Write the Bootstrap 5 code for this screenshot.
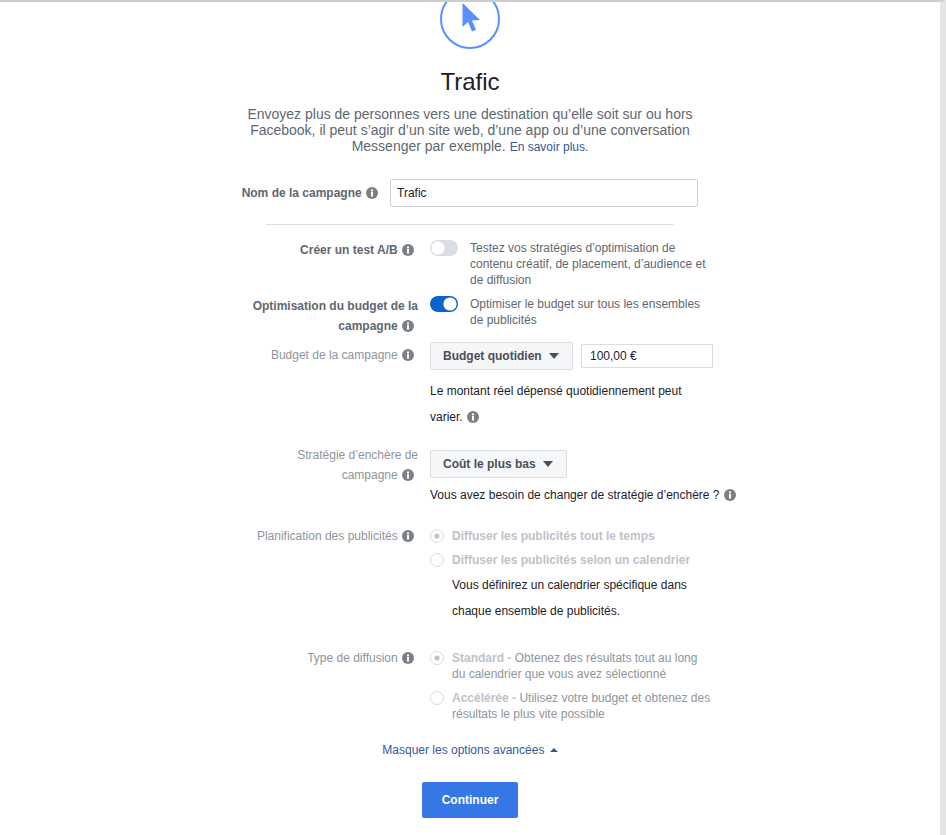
<!DOCTYPE html>
<html lang="fr">
<head>
    <meta charset="UTF-8">
    <meta name="viewport" content="width=device-width, initial-scale=1.0">
    <title>Trafic</title>
    <link href="https://cdn.jsdelivr.net/npm/bootstrap@5.3.0/dist/css/bootstrap.min.css" rel="stylesheet">
    <style>
        html, body { height: 835px; overflow: hidden; }
        body { background: #fff; font-family: "Liberation Sans", Arial, sans-serif; font-size: 12px; line-height: 16px; color: #606770; }
        .page-shell { height: 835px; border-top: 2px solid #cdcdcd; border-right: 6px solid #e4e4e4; overflow: hidden; }
        .objective-circle { width: 60px; height: 60px; margin: -13px auto 0; border: 2px solid #5890ff; border-radius: 50%; }
        .objective-title { margin: 17px 0 0; font-size: 24px; line-height: 32px; font-weight: 400; color: #1d2129; }
        .objective-desc { width: 470px; margin: 8px auto 0; font-size: 14px; line-height: 16px; color: #606770; }
        .fb-link { color: #365899; font-size: 12px; text-decoration: none; }
        .setup-form { width: 500px; margin: 24px 0 0 230px; }
        .name-row { height: 28px; }
        .name-label { width: 160px; padding-right: 12px; }
        .name-input.form-control { width: 308px; height: 28px; padding: 0 6px; border: 1px solid #ccd0d5; border-radius: 2px; font-size: 12px; color: #1d2129; }
        .form-sep { width: 408px; margin: 17px 0 15px 36px; border-top: 1px solid #dadde1; opacity: 1; }
        .field-label { width: 188px; flex: none; margin-right: 12px; text-align: right; font-size: 12px; line-height: 20px; color: #90949c; }
        .field-label.strong-label { font-weight: 700; color: #606770; }
        .field-label .info-ico { margin-right: 4px; }
        .budget-label { padding-top: 3px; }
        .field-body { flex: 1 1 auto; min-width: 0; }
        .bid-body { padding-top: 5px; }
        .info-ico { width: 12px; height: 12px; margin-left: 1px; vertical-align: -2px; }
        .switch-line { display: flex; gap: 12px; }
        .switch-line .form-check-input { width: 28px; height: 16px; margin: 0; flex: none; border: 0; border-radius: 8px; background-color: #dadde1; background-position: left center; background-image: url("data:image/svg+xml,%3csvg xmlns='http://www.w3.org/2000/svg' viewBox='-4 -4 8 8'%3e%3ccircle r='3.3' fill='%23fff'/%3e%3c/svg%3e"); }
        .switch-line .form-check-input:checked { background-color: #0b63ce; background-position: right center; }
        .switch-text { width: 240px; }
        .select-btn.btn { height: 28px; padding: 0 12px; border: 1px solid #dadde1; border-radius: 2px; background: #f5f6f7; color: #4b4f56; font-size: 12px; font-weight: 700; line-height: 26px; }
        .caret-down { display: inline-block; margin-left: 4px; margin-right: 1px; vertical-align: 1px; border-left: 5px solid transparent; border-right: 5px solid transparent; border-top: 6px solid #4b4f56; }
        .budget-input.form-control { width: 132px; height: 24px; padding: 0 8px; border: 1px solid #dadde1; border-radius: 0; font-size: 12px; color: #1d2129; }
        .black-note { margin: 0; line-height: 26px; color: #1d2129; }
        .budget-row { margin-top: 6px; }
        .budget-note { margin-top: 8px; }
        .schedule-note { margin-left: 22px; }
        .bid-row { margin-top: 15px; }
        .plan-row { margin-top: 18px; }
        .radio-line { display: flex; gap: 8px; min-height: 16px; margin-top: 2px; }
        .radio-line + .radio-line { margin-top: 8px; }
        .radio-line .form-check-input { width: 14px; height: 14px; margin: 1px 0 0; flex: none; opacity: 1; border: 1px solid #dadde1; background-color: #fff; background-image: none; }
        .radio-line .form-check-input:checked { background-color: #fff; background-image: url("data:image/svg+xml,%3csvg xmlns='http://www.w3.org/2000/svg' viewBox='-7 -7 14 14'%3e%3ccircle r='3' fill='%23bec2c9'/%3e%3c/svg%3e"); }
        .radio-strong { font-weight: 700; color: #bec2c9; }
        .radio-text { color: #90949c; width: 262px; }
        .more-link { margin: 20px 0 0; color: #365899; line-height: 16px; }
        .caret-up { display: inline-block; margin-left: 2px; vertical-align: 2px; border-left: 4px solid transparent; border-right: 4px solid transparent; border-bottom: 4px solid #365899; }
        .continue-btn.btn { width: 96px; height: 36px; padding: 0; border: 0; border-radius: 2px; background: #3578e5; color: #fff; font-size: 12px; font-weight: 700; }
    </style>
</head>
<body>
<svg width="0" height="0" class="d-block">
    <symbol id="info" viewBox="0 0 12 12">
        <circle cx="6" cy="6" r="6" fill="#7b8087"/>
        <rect x="5" y="5" width="2" height="4.6" fill="#fff"/>
        <circle cx="6" cy="3.4" r="1.15" fill="#fff"/>
    </symbol>
</svg>
<div class="page-shell">
    <div class="objective-circle d-flex align-items-center justify-content-center">
        <svg width="24" height="32" viewBox="0 0 24 32"><path d="M4.5 0 L4.5 24 L10 19 L14 28.5 L18 26.8 L14 17.6 L22 17 Z" fill="#5890ff"/></svg>
    </div>
    <div class="text-center">
        <h1 class="objective-title">Trafic</h1>
        <p class="objective-desc">Envoyez plus de personnes vers une destination qu’elle soit sur ou hors Facebook, il peut s’agir d’un site web, d’une app ou d’une conversation Messenger par exemple. <a href="#" class="fb-link">En savoir plus.</a></p>
    </div>

    <form class="setup-form">
        <div class="name-row d-flex align-items-center">
            <div class="name-label text-end fw-bold">Nom de la campagne <svg class="info-ico"><use href="#info"/></svg></div>
            <input type="text" class="form-control name-input" value="Trafic">
        </div>
        <hr class="form-sep">

        <div class="d-flex mb-2">
            <div class="field-label strong-label">Créer un test A/B <svg class="info-ico"><use href="#info"/></svg></div>
            <div class="field-body switch-line">
                <input class="form-check-input" type="checkbox" role="switch">
                <div class="switch-text">Testez vos stratégies d’optimisation de contenu créatif, de placement, d’audience et de diffusion</div>
            </div>
        </div>

        <div class="d-flex">
            <div class="field-label strong-label">Optimisation du budget de la campagne <svg class="info-ico"><use href="#info"/></svg></div>
            <div class="field-body switch-line">
                <input class="form-check-input" type="checkbox" role="switch" checked>
                <div class="switch-text">Optimiser le budget sur tous les ensembles de publicités</div>
            </div>
        </div>

        <div class="d-flex budget-row">
            <div class="field-label budget-label">Budget de la campagne <svg class="info-ico"><use href="#info"/></svg></div>
            <div class="field-body">
                <div class="d-flex align-items-center gap-2">
                    <button type="button" class="btn select-btn">Budget quotidien <span class="caret-down"></span></button>
                    <input type="text" class="form-control budget-input" value="100,00 €">
                </div>
                <p class="black-note budget-note">Le montant réel dépensé quotidiennement peut<br>varier. <svg class="info-ico"><use href="#info"/></svg></p>
            </div>
        </div>

        <div class="d-flex bid-row">
            <div class="field-label">Stratégie d’enchère de<br>campagne <svg class="info-ico"><use href="#info"/></svg></div>
            <div class="field-body bid-body">
                <button type="button" class="btn select-btn">Coût le plus bas <span class="caret-down"></span></button>
                <p class="black-note mt-1 text-nowrap">Vous avez besoin de changer de stratégie d’enchère ? <svg class="info-ico"><use href="#info"/></svg></p>
            </div>
        </div>

        <div class="d-flex plan-row">
            <div class="field-label">Planification des publicités <svg class="info-ico"><use href="#info"/></svg></div>
            <div class="field-body">
                <div class="radio-line">
                    <input class="form-check-input" type="radio" name="schedule" checked disabled>
                    <div class="radio-strong">Diffuser les publicités tout le temps</div>
                </div>
                <div class="radio-line">
                    <input class="form-check-input" type="radio" name="schedule" disabled>
                    <div class="radio-strong">Diffuser les publicités selon un calendrier</div>
                </div>
                <p class="black-note schedule-note mt-1">Vous définirez un calendrier spécifique dans<br>chaque ensemble de publicités.</p>
            </div>
        </div>

        <div class="d-flex mt-4">
            <div class="field-label">Type de diffusion <svg class="info-ico"><use href="#info"/></svg></div>
            <div class="field-body">
                <div class="radio-line">
                    <input class="form-check-input" type="radio" name="delivery" checked disabled>
                    <div class="radio-text"><span class="radio-strong">Standard -</span> Obtenez des résultats tout au long du calendrier que vous avez sélectionné</div>
                </div>
                <div class="radio-line">
                    <input class="form-check-input" type="radio" name="delivery" disabled>
                    <div class="radio-text"><span class="radio-strong">Accélérée -</span> Utilisez votre budget et obtenez des résultats le plus vite possible</div>
                </div>
            </div>
        </div>
    </form>

    <div class="text-center">
        <p class="more-link">Masquer les options avancées <span class="caret-up"></span></p>
        <button type="button" class="btn continue-btn mt-4">Continuer</button>
    </div>
</div>
<script src="https://cdn.jsdelivr.net/npm/bootstrap@5.3.0/dist/js/bootstrap.bundle.min.js"></script>
</body>
</html>
